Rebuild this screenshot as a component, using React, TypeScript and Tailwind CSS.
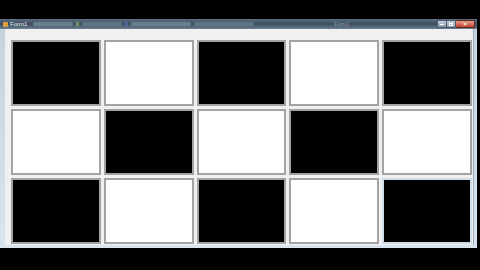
import React from "react";

const cells = [
  1, 0, 1, 0, 1,
  0, 1, 0, 1, 0,
  1, 0, 1, 0, 1,
];

const App: React.FC = () => {
  return (
    <div className="w-[480px] h-[270px] bg-black flex flex-col font-['Liberation_Sans',sans-serif] overflow-hidden">
      <div className="h-[19px] shrink-0" />
      <div className="w-[477px] h-[229px] flex flex-col bg-[#b9c9d8]">
        {/* title bar */}
        <div className="h-[10px] shrink-0 flex items-center bg-gradient-to-b from-[#5d6f82] via-[#3d4d5e] to-[#6d7f90] relative">
          <div className="w-[5px] h-[5px] ml-[3px] bg-[#e0a040] rounded-[1px]" />
          <span className="text-[6px] leading-none text-[#e8eef4] ml-[2px]">Form1</span>
          <div className="ml-[6px] flex items-center gap-[3px] opacity-70">
            <div className="w-[40px] h-[4px] bg-[#7d8fa0] rounded-sm" />
            <div className="w-[3px] h-[4px] bg-[#8fb060]" />
            <div className="w-[40px] h-[4px] bg-[#6d7f94] rounded-sm" />
            <div className="w-[3px] h-[4px] bg-[#5070b0]" />
            <div className="w-[60px] h-[4px] bg-[#7d8fa4] rounded-sm" />
            <div className="w-[60px] h-[4px] bg-[#6d8096] rounded-sm" />
          </div>
          <span className="ml-[80px] text-[5px] leading-none text-[#c8d4e0] opacity-60">Form1</span>
          <div className="ml-auto mr-[2px] flex items-center h-[9px]">
            <div className="w-[10px] h-[8px] bg-gradient-to-b from-[#c7d3de] to-[#8396a8] border border-[#4a5a6a] flex items-center justify-center">
              <div className="w-[4px] h-[1px] bg-white" />
            </div>
            <div className="w-[9px] h-[8px] bg-gradient-to-b from-[#c7d3de] to-[#8396a8] border border-[#4a5a6a] border-l-0 flex items-center justify-center">
              <div className="w-[4px] h-[3px] border border-white" />
            </div>
            <div className="w-[19px] h-[8px] bg-gradient-to-b from-[#e8a090] to-[#c0402c] border border-[#5a2a20] border-l-0 flex items-center justify-center text-white text-[6px] leading-none font-bold">
              ×
            </div>
          </div>
        </div>
        {/* window body */}
        <div className="flex-1 pl-[5px] pr-[3px] pb-[3px] bg-gradient-to-b from-[#c6d3e0] to-[#d9e4ee]">
          <div className="h-full bg-[#f0f0f0] pt-[11px] pl-[6px] pr-[2px] border-r border-[#9ab]">
            <div className="w-[461px] grid grid-cols-5 grid-rows-3 gap-[3px] h-[204px]">
              {cells.map((c, i) => (
                <div
                  key={i}
                  className={
                    "border-[2px] " +
                    (i === 14 ? "border-[#cfdde8] " : "border-[#a3a3a3] ") +
                    (c ? "bg-black" : "bg-white")
                  }
                />
              ))}
            </div>
          </div>
        </div>
      </div>
    </div>
  );
};

export default App;
